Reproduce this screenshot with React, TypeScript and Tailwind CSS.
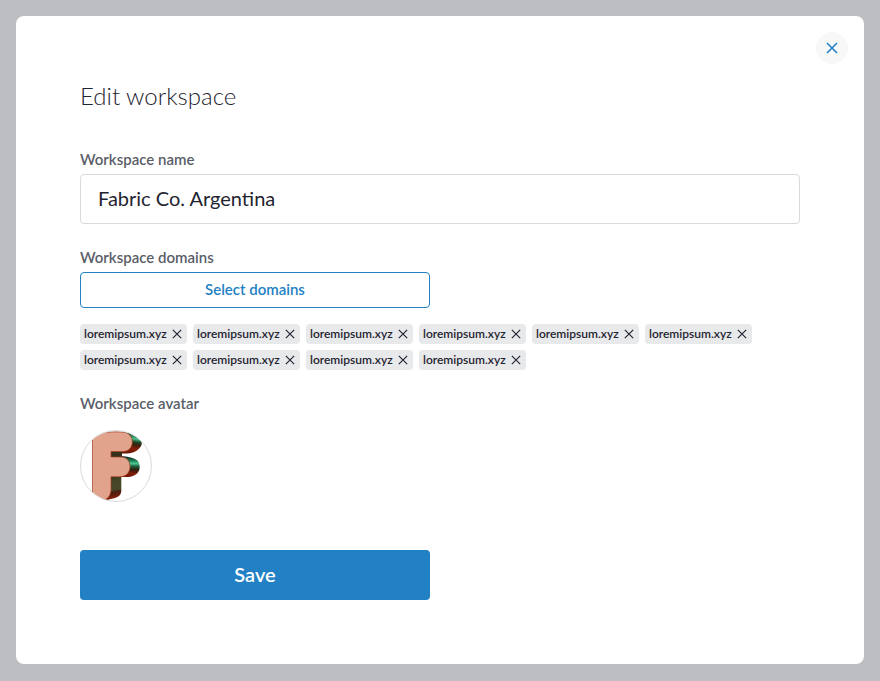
import React, { useState } from 'react';

const INITIAL_DOMAINS = Array.from({ length: 10 }, (_, i) => ({ id: i, name: 'loremipsum.xyz' }));

function CrossIcon({ className }: { className?: string }) {
    return (
        <svg viewBox="0 0 12 12" className={className} fill="none" stroke="currentColor" aria-hidden="true">
            <path d="M1 1l10 10M11 1L1 11" />
        </svg>
    );
}

function WorkspaceAvatar() {
    return (
        <svg viewBox="0 0 72 72" className="block h-[72px] w-[72px]" role="img" aria-label="Workspace avatar">
            <defs>
                <clipPath id="avatar-clip">
                    <circle cx="36" cy="36" r="35.5" />
                </clipPath>
                <linearGradient id="upper-side" x1="55" y1="1" x2="52" y2="24" gradientUnits="userSpaceOnUse">
                    <stop offset="0" stopColor="#123a26" />
                    <stop offset="0.2" stopColor="#1c6844" />
                    <stop offset="0.34" stopColor="#4cc28a" />
                    <stop offset="0.46" stopColor="#1d4a2d" />
                    <stop offset="0.58" stopColor="#38200e" />
                    <stop offset="0.76" stopColor="#861e08" />
                    <stop offset="1" stopColor="#661806" />
                </linearGradient>
                <linearGradient id="lower-side" x1="0" y1="26" x2="0" y2="48" gradientUnits="userSpaceOnUse">
                    <stop offset="0" stopColor="#12241a" />
                    <stop offset="0.2" stopColor="#1c7550" />
                    <stop offset="0.34" stopColor="#48c890" />
                    <stop offset="0.48" stopColor="#1d5a36" />
                    <stop offset="0.62" stopColor="#301d0e" />
                    <stop offset="0.82" stopColor="#861d07" />
                    <stop offset="1" stopColor="#5a1406" />
                </linearGradient>
                <linearGradient id="leg-side" x1="34" y1="47" x2="38" y2="69" gradientUnits="userSpaceOnUse">
                    <stop offset="0" stopColor="#343a1f" />
                    <stop offset="0.2" stopColor="#47472a" />
                    <stop offset="0.55" stopColor="#47472a" />
                    <stop offset="0.68" stopColor="#4a1d0c" />
                    <stop offset="1" stopColor="#962208" />
                </linearGradient>
            </defs>
            <circle cx="36" cy="36" r="35.5" fill="#fff" />
            <g clipPath="url(#avatar-clip)">
                <path d="M44 1.500C50 1.500 53 4 57 7.500C61 10 62.500 12 61.500 15C59.500 20 54 23 47 23.500H31V21Z" fill="url(#upper-side)" />
                <path d="M40 26.300C45 26.300 50 26.800 54 28.500C58 30 60 33 59.700 38C59 43 55 46.500 48 47H31Z" fill="url(#lower-side)" />
                <path d="M30.500 46.500H41.300V61C41 66 37 68 31 69L23 71V66Z" fill="url(#leg-side)" />
                <path d="M30.500 21.500H42V27H30.500Z" fill="#35301a" />
                <path
                    d="M12.500 68V8C12.500 4 15 3 19 2.700C29 2 36 1.500 44 2.200C49 2.800 52.300 7 52.300 12C52.300 17.500 48.500 21.500 43 21.500H31V27H41C46.500 27 50 31 50 36.500C50 42.500 46 46.800 40 46.800H31V59C31 64 29 68 25 69.500C20 71 16 70 12.500 68Z"
                    fill="#e2a38d"
                    stroke="#a63d20"
                    strokeWidth="0.700"
                />
            </g>
            <circle cx="36" cy="36" r="35.5" fill="none" stroke="#d9dadc" />
        </svg>
    );
}

export default function EditWorkspaceModal() {
    const [name, setName] = useState('Fabric Co. Argentina');
    const [domains, setDomains] = useState(INITIAL_DOMAINS);

    const removeDomain = (id: number) => {
        setDomains((prev) => prev.filter((d) => d.id !== id));
    };

    return (
        <div className="min-h-screen bg-[#bdbec2] p-4 font-['Lato',sans-serif] text-[#1f2430]">
            <div role="dialog" aria-labelledby="modal-title" className="relative rounded-lg bg-white p-16">
                <button
                    type="button"
                    aria-label="Close"
                    className="absolute top-4 right-4 flex h-8 w-8 items-center justify-center rounded-full bg-[#f8f8f8] text-[#2281c4]"
                >
                    <CrossIcon className="h-3 w-3 stroke-[1.6]" />
                </button>

                <h2 id="modal-title" className="text-2xl leading-8 font-light">
                    Edit workspace
                </h2>

                <form className="mt-9" onSubmit={(e) => e.preventDefault()}>
                    <label htmlFor="workspace-name" className="block text-[15px] leading-[22px] font-semibold text-[#5a5e68]">
                        Workspace name
                    </label>
                    <input
                        id="workspace-name"
                        type="text"
                        value={name}
                        onChange={(e) => setName(e.target.value)}
                        className="mt-1 block h-[50px] w-full rounded border border-[#d9dadc] bg-white px-[17px] pb-[2px] text-xl outline-none focus:border-[#2281c4]"
                    />

                    <h3 className="mt-[22px] text-[15px] leading-[22px] font-semibold text-[#5a5e68]">Workspace domains</h3>
                    <button
                        type="button"
                        className="mt-1 block h-9 w-full max-w-[350px] rounded border border-[#2281c4] pb-[2px] text-[15px] font-semibold text-[#2281c4]"
                    >
                        Select domains
                    </button>

                    <ul className="mt-4 flex flex-wrap gap-[6px]">
                        {domains.map((domain) => (
                            <li key={domain.id} className="flex h-5 w-[107px] items-center justify-between rounded bg-[#e8e9eb] px-1 text-xs font-semibold">
                                <span className="pb-px">{domain.name}</span>
                                <button type="button" aria-label={`Remove ${domain.name}`} onClick={() => removeDomain(domain.id)} className="p-px">
                                    <CrossIcon className="h-[10px] w-[10px] stroke-[1.4]" />
                                </button>
                            </li>
                        ))}
                    </ul>

                    <h3 className="mt-[22px] text-[15px] leading-[22px] font-semibold text-[#5a5e68]">Workspace avatar</h3>
                    <button type="button" aria-label="Change avatar" className="mt-4 block rounded-full">
                        <WorkspaceAvatar />
                    </button>

                    <button type="submit" className="mt-12 block h-[50px] w-full max-w-[350px] rounded bg-[#2281c4] pb-[2px] text-xl font-semibold text-white">
                        Save
                    </button>
                </form>
            </div>
        </div>
    );
}
